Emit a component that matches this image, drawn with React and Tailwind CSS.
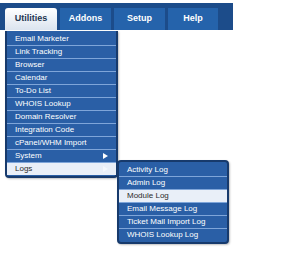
import React from 'react'

const utilities = [
  'Email Marketer',
  'Link Tracking',
  'Browser',
  'Calendar',
  'To-Do List',
  'WHOIS Lookup',
  'Domain Resolver',
  'Integration Code',
  'cPanel/WHM Import',
  'System',
  'Logs',
]

const logs = [
  'Activity Log',
  'Admin Log',
  'Module Log',
  'Email Message Log',
  'Ticket Mail Import Log',
  'WHOIS Lookup Log',
]

function Arrow({ light }) {
  return (
    <svg width="5" height="6" viewBox="0 0 5 6" className="shrink-0">
      <path d="M0 0 L5 3 L0 6 Z" fill={light ? '#f4f7fc' : '#ffffff'} />
    </svg>
  )
}

function App() {
  return (
    <div className="relative w-[300px] h-[255px] bg-white font-['Liberation_Sans',Arial,sans-serif] overflow-hidden">
      <div className="pt-[3px]">
        <nav className="w-[233px] h-[27px] bg-[#1c4c8a] flex items-end pl-[5px] gap-[3px]">
          <div className="w-[52px] h-[22px] rounded-t-[3px] bg-gradient-to-b from-white to-[#dbe4ef] flex items-center justify-center text-[9px] font-bold text-[#1e3550]">
            Utilities
          </div>
          <div className="w-[51px] h-[22px] bg-[#2563ab] flex items-center justify-center text-[9px] font-bold text-white">
            Addons
          </div>
          <div className="w-[51px] h-[22px] bg-[#2563ab] flex items-center justify-center text-[9px] font-bold text-white">
            Setup
          </div>
          <div className="w-[50px] h-[22px] bg-[#2563ab] flex items-center justify-center text-[9px] font-bold text-white">
            Help
          </div>
        </nav>
      </div>

      <ul className="absolute left-[5px] top-[31px] w-[113px] bg-[#2a5fa6] border-2 border-t-0 border-[#173a6c] rounded-b-[4px] pt-px pb-px shadow-[1px_1px_2px_rgba(0,0,0,0.25)]">
        {utilities.map((item, i) => {
          const active = item === 'Logs'
          return (
            <li
              key={item}
              className={`h-[13px] px-[8px] flex items-center justify-between text-[8px] leading-none ${
                i > 0 ? 'border-t border-[#7ea5d9]' : ''
              } ${active ? 'bg-[#e9eff8] text-[#2b2b2b]' : 'text-white'}`}
            >
              <span>{item}</span>
              {item === 'System' && <Arrow />}
              {item === 'Logs' && <Arrow light />}
            </li>
          )
        })}
      </ul>

      <ul className="absolute left-[117px] top-[160px] w-[112px] bg-[#2a5fa6] border-2 border-[#173a6c] rounded-[4px] pt-px pb-px shadow-[1px_1px_2px_rgba(0,0,0,0.25)]">
        {logs.map((item, i) => {
          const active = item === 'Module Log'
          return (
            <li
              key={item}
              className={`h-[13px] px-[8px] flex items-center text-[8px] leading-none ${
                i > 0 ? 'border-t border-[#7ea5d9]' : ''
              } ${active ? 'bg-[#e9eff8] text-[#2b2b2b]' : 'text-white'}`}
            >
              {item}
            </li>
          )
        })}
      </ul>
    </div>
  )
}

export default App
